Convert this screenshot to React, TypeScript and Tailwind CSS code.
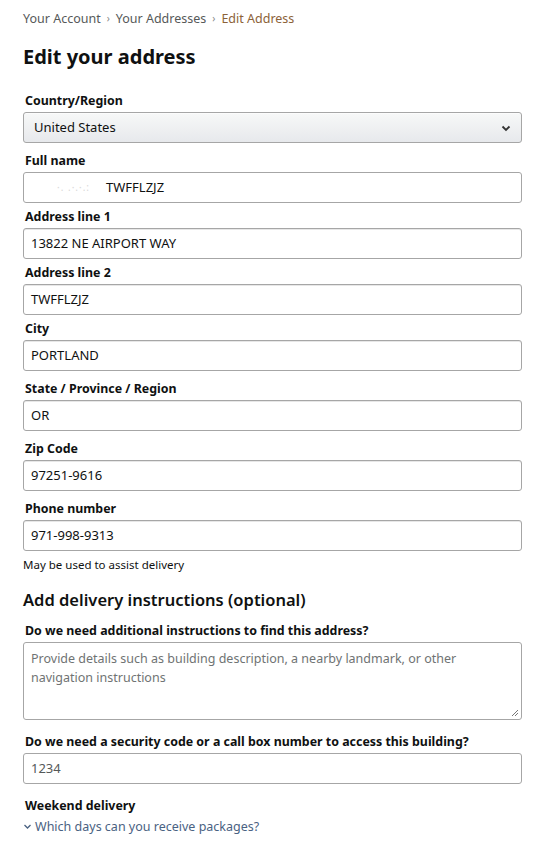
import React from "react";

const font = { fontFamily: '"Noto Sans", "Open Sans", Arial, sans-serif' };

function Label({ children }: { children: React.ReactNode }) {
  return (
    <div className="pl-[2px] text-[12.4px] font-bold leading-[19px] text-[#0f1111] mb-[2px]">{children}</div>
  );
}

function Input({ value }: { value: string }) {
  return (
    <div className="h-[31px] w-[499px] border border-[#a6a6a6] rounded-[3px] bg-white px-[7px] flex items-center text-[13px] text-[#0f1111] shadow-[inset_0_1px_0_rgba(15,17,17,0.1)]">
      {value}
    </div>
  );
}

function Field({ label, value, mt }: { label: string; value: React.ReactNode; mt: string }) {
  return (
    <div className={mt}>
      <Label>{label}</Label>
      {typeof value === "string" ? <Input value={value} /> : value}
    </div>
  );
}

export default function App() {
  return (
    <div className="w-[550px] h-[843px] bg-white overflow-hidden pl-[23px]" style={font}>
      <div className="pt-[8px] h-[28px] flex items-center gap-[6px] text-[12.5px] text-[#565959] leading-[19px]">
        <span>Your Account</span>
        <span className="text-[10px] text-[#888]">›</span>
        <span>Your Addresses</span>
        <span className="text-[10px] text-[#888]">›</span>
        <span className="text-[#8c6239]">Edit Address</span>
      </div>
      <h1 className="mt-[15px] text-[20px] font-bold leading-[28px] text-[#0f1111]">Edit your address</h1>
      <div className="mt-[20px]">
        <Label>Country/Region</Label>
        <div className="h-[31px] w-[499px] border border-[#a6a6a6] rounded-[3px] bg-gradient-to-b from-[#f7f8f8] to-[#e7e9ec] shadow-[0_1px_0_rgba(255,255,255,0.6)_inset] px-[10px] flex items-center justify-between text-[13px] text-[#0f1111]">
          <span>United States</span>
          <svg width="12" height="12" viewBox="0 0 12 12" className="mr-[-1px]">
            <path d="M2.5 4.5 L6 8 L9.5 4.5" fill="none" stroke="#333" strokeWidth="1.8" />
          </svg>
        </div>
      </div>
      <Field
        mt="mt-[8px]"
        label="Full name"
        value={
          <div className="h-[31px] w-[499px] border border-[#a6a6a6] rounded-[3px] bg-white px-[7px] flex items-center text-[13px] text-[#0f1111]">
            <span className="text-[#d8d8d8] text-[10px] ml-[26px] mr-[16px] tracking-[1px]">·. .·.·.:</span>
            <span>TWFFLZJZ</span>
          </div>
        }
      />
      <Field mt="mt-[4px]" label="Address line 1" value="13822 NE AIRPORT WAY" />
      <Field mt="mt-[4px]" label="Address line 2" value="TWFFLZJZ" />
      <Field mt="mt-[4px]" label="City" value="PORTLAND" />
      <Field mt="mt-[8px]" label="State / Province / Region" value="OR" />
      <Field mt="mt-[8px]" label="Zip Code" value="97251-9616" />
      <Field mt="mt-[8px]" label="Phone number" value="971-998-9313" />
      <div className="mt-[5px] text-[11.5px] leading-[18px] text-[#0f1111]">May be used to assist delivery</div>
      <h2 className="mt-[14px] text-[16.5px] font-semibold leading-[24px] text-[#0f1111]">Add delivery instructions (optional)</h2>
      <div className="mt-[9px]">
        <Label>Do we need additional instructions to find this address?</Label>
        <div className="relative h-[78px] w-[499px] border border-[#a6a6a6] rounded-[3px] bg-white px-[7px] pt-[6px] text-[12.5px] leading-[19px] text-[#6f7373]">
          Provide details such as building description, a nearby landmark, or other navigation instructions
          <svg width="8" height="8" viewBox="0 0 8 8" className="absolute right-[2px] bottom-[2px]">
            <path d="M7 1 L1 7 M7 4 L4 7" stroke="#777" strokeWidth="1" />
          </svg>
        </div>
      </div>
      <div className="mt-[12px]">
        <Label>Do we need a security code or a call box number to access this building?</Label>
        <div className="h-[31px] w-[499px] border border-[#a6a6a6] rounded-[3px] bg-white px-[7px] flex items-center text-[13px] text-[#555959]">1234</div>
      </div>
      <div className="mt-[12px]">
        <Label>Weekend delivery</Label>
      </div>
      <div className="mt-[1px] flex items-center gap-[3px] text-[12.5px] leading-[19px] text-[#4a6282]">
        <svg width="9" height="9" viewBox="0 0 9 9">
          <path d="M1.5 3 L4.5 6 L7.5 3" fill="none" stroke="#4a6282" strokeWidth="1.3" />
        </svg>
        <span>Which days can you receive packages?</span>
      </div>
    </div>
  );
}
